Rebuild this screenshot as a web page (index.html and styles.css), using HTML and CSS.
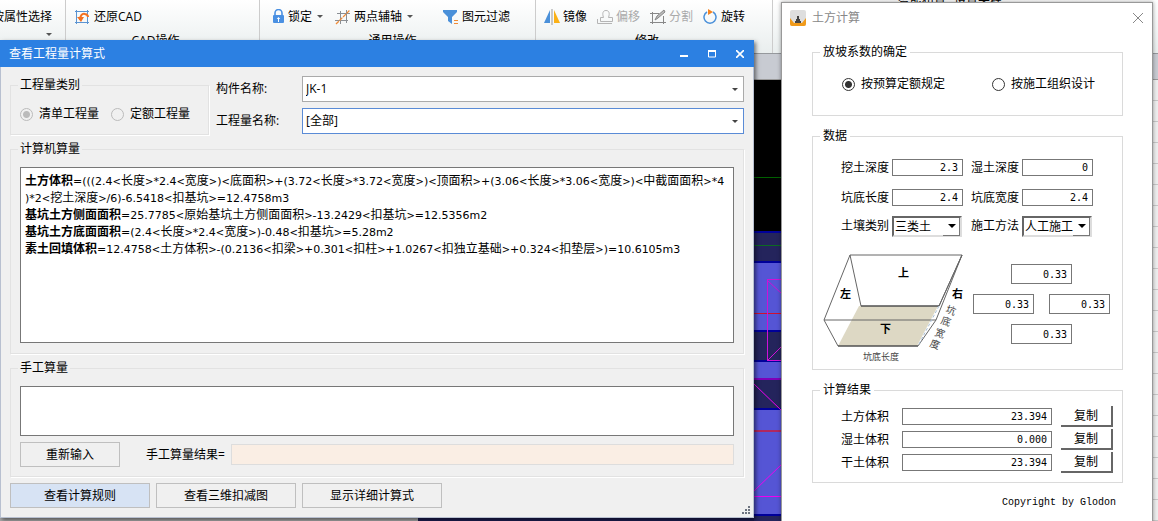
FILE: index.html
```html
<!DOCTYPE html>
<html lang="zh-CN">
<head>
<meta charset="utf-8">
<title>查看工程量计算式</title>
<link rel="stylesheet" href="styles.css">
</head>
<body>
<div class="desktop">
  <header class="ribbon">
    <section class="group group-select">
      <div class="tools"><button class="tool">按属性选择</button></div>
      <div class="caption"><i class="caret"></i></div>
    </section>
    <section class="group group-cad">
      <div class="tools">
        <button class="tool">
          <svg width="16" height="16" viewBox="0 0 16 16" fill="none"><path d="M2.500 1v14M13.500 1v14M1 2.500h14M1 13.500h14" stroke="#5b94d2"/><path d="M6 11c0-4 2-7 5-6 2 .5 3 1 3 3" stroke="#f37021" stroke-width="2"/><path d="M3 8l7 0-3 5z" fill="#f37021"/></svg>
          还原CAD
        </button>
      </div>
      <div class="caption">CAD操作 <i class="caret"></i></div>
    </section>
    <section class="group group-common">
      <div class="tools">
        <button class="tool">
          <svg width="13" height="15" viewBox="0 0 13 15"><path d="M3 7V4a3 3 0 0 1 7 0v3" fill="none" stroke="#4a90e2" stroke-width="1.6"/><rect x="1" y="6" width="11" height="8" rx="1" fill="#4a90e2"/><path d="M6.500 8l1.800 2H7v3H6v-3H4.700z" fill="#fff"/></svg>
          锁定 <i class="caret"></i>
        </button>
        <button class="tool">
          <svg width="16" height="16" viewBox="0 0 16 16" fill="none"><path d="M5.500 2v13M11.500 1v13M2 4.500h13M0 11.500h13" stroke="#8b8f94"/><path d="M1 15L15 1" stroke="#f08a35" stroke-width="1.3" stroke-dasharray="4 1"/></svg>
          两点辅轴 <i class="caret"></i>
        </button>
        <button class="tool tool-filter">
          <svg width="16" height="16" viewBox="0 0 16 16"><path d="M0 1h14v2L9 8v7l-4-3V8L0 3z" fill="#4a90d9"/><path d="M11 11.500h4M11 14.500h4" stroke="#f08a35"/></svg>
          图元过滤
        </button>
      </div>
      <div class="caption">通用操作 <i class="caret"></i></div>
    </section>
    <section class="group group-edit">
      <div class="tools">
        <button class="tool">
          <svg width="16" height="16" viewBox="0 0 16 16"><path d="M6 1v13H0z" fill="#4a90d9"/><path d="M10 1v13h6z" fill="#fbb116"/><path d="M8 0v16" stroke="#999"/></svg>
          镜像
        </button>
        <button class="tool" disabled>
          <svg width="16" height="16" viewBox="0 0 16 16" fill="none" stroke="#b5b5b5"><path d="M3.500 12.500v-4h3C5 4 6 1.500 9 1.500s4 2.500 2.500 7h4v4z"/><path d="M.5 10v4.500H15"/></svg>
          偏移
        </button>
        <button class="tool" disabled>
          <svg width="16" height="16" viewBox="0 0 16 16" fill="none" stroke="#888"><path d="M0 4.500h9M2.500 3v12M0 13.500h16M13.500 7v8"/><path d="M5 11l2-4 7-6 1 2-7 6z" fill="#bbb"/></svg>
          分割
        </button>
        <button class="tool">
          <svg width="15" height="16" viewBox="0 0 15 16" fill="none"><path d="M10 3a6 6 0 1 1-6 0" stroke="#4a90d9" stroke-width="1.500"/><path d="M5 0l5 3-5 3z" fill="#f5821f"/></svg>
          旋转
        </button>
      </div>
      <div class="caption">修改 <i class="caret"></i></div>
    </section>
    <section class="group group-smart">
      <span>智能布置</span><span>设置夹柱</span>
    </section>
  </header>
  <div class="toolstrip"></div>
  <main class="canvas"></main>
  <footer class="panels"><div class="panel-list"></div></footer>
  <svg class="model" width="28" height="441" viewBox="0 0 28 441">
    <rect width="28" height="441" fill="#000"/>
    <path d="M0 97.500h28" stroke="#006000"/>
    <path d="M0 151h28v31H0zM0 251h28v30H0zM0 299h28v30H0zM0 434h28v7H0z" fill="#24245c"/>
    <path d="M0 182h28v69H0zM0 281h28v18H0zM0 329h28v105H0z" fill="#5555d5"/>
    <path d="M0 152h28M0 182h28M0 251h28M0 281h28M0 329h28M0 435h28" stroke="#00009a" stroke-width="2"/>
    <path d="M0 165.500h28" stroke="#0c6a22"/>
    <path d="M0 233.500h28" stroke="#d01030"/>
    <path d="M0 351h28" stroke="#b02860" stroke-width="2"/>
    <path d="M0 299h28" stroke="#8000b8" stroke-width="2"/>
    <path d="M13.500 281V200M13 199.500h15M13 200l15 14M13 281l15-15M13 280.500h15" stroke="#d010d8" fill="none"/>
    <path d="M0 304l28 27M0 411l28-27M0 416.500h28" stroke="#f000f0" fill="none"/>
  </svg>
  <aside class="sidegrid"></aside>

  <section class="window calc">
    <div class="titlebar">
      <h1>查看工程量计算式</h1>
      <button aria-label="最小化"><svg width="8" height="8"><path d="M0 6h8" stroke="#fff" stroke-width="2"/></svg></button>
      <button aria-label="最大化"><svg width="8" height="8"><path d="M.5 1v6h7V1" stroke="#fff" fill="none"/><path d="M0 1h8" stroke="#fff" stroke-width="2"/></svg></button>
      <button aria-label="关闭"><svg width="8" height="8"><path d="M0 0l8 8M8 0L0 8" stroke="#fff" stroke-width="1.600"/></svg></button>
    </div>
    <div class="calc-body">
      <div class="calc-top">
        <fieldset class="kind">
          <legend>工程量类别</legend>
          <label><input type="radio" name="kind" checked disabled>清单工程量</label>
          <label><input type="radio" name="kind" disabled>定额工程量</label>
        </fieldset>
        <div class="pickers">
          <label for="component">构件名称:</label>
          <div class="combo"><select id="component"><option>JK-1</option></select></div>
          <label for="quantity">工程量名称:</label>
          <div class="combo active"><select id="quantity"><option>[全部]</option></select></div>
        </div>
      </div>
      <fieldset class="auto-box">
        <legend>计算机算量</legend>
        <div class="formula">
          <p><b>土方体积</b>=(((2.4<i>&lt;<span>长度</span>&gt;</i>*2.4<i>&lt;<span>宽度</span>&gt;</i>)<i>&lt;<span>底面积</span>&gt;</i>+(3.72<i>&lt;<span>长度</span>&gt;</i>*3.72<i>&lt;<span>宽度</span>&gt;</i>)<i>&lt;<span>顶面积</span>&gt;</i>+(3.06<i>&lt;<span>长度</span>&gt;</i>*3.06<i>&lt;<span>宽度</span>&gt;</i>)<i>&lt;<span>中截面面积</span>&gt;</i>*4<br>)*2<i>&lt;<span>挖土深度</span>&gt;</i>/6)-6.5418<i>&lt;<span>扣基坑</span>&gt;</i>=12.4758m3</p>
          <p><b>基坑土方侧面面积</b>=25.7785<i>&lt;<span>原始基坑土方侧面面积</span>&gt;</i>-13.2429<i>&lt;<span>扣基坑</span>&gt;</i>=12.5356m2</p>
          <p><b>基坑土方底面面积</b>=(2.4<i>&lt;<span>长度</span>&gt;</i>*2.4<i>&lt;<span>宽度</span>&gt;</i>)-0.48<i>&lt;<span>扣基坑</span>&gt;</i>=5.28m2</p>
          <p><b>素土回填体积</b>=12.4758<i>&lt;<span>土方体积</span>&gt;</i>-(0.2136<i>&lt;<span>扣梁</span>&gt;</i>+0.301<i>&lt;<span>扣柱</span>&gt;</i>+1.0267<i>&lt;<span>扣独立基础</span>&gt;</i>+0.324<i>&lt;<span>扣垫层</span>&gt;</i>)=10.6105m3</p>
        </div>
      </fieldset>
      <fieldset>
        <legend>手工算量</legend>
        <textarea class="manual" aria-label="手工算量"></textarea>
        <div class="manual-row">
          <button class="btn reset">重新输入</button>
          <label for="manual-result">手工算量结果=</label>
          <input id="manual-result" readonly>
        </div>
      </fieldset>
      <div class="actions">
        <button class="btn primary">查看计算规则</button>
        <button class="btn">查看三维扣减图</button>
        <button class="btn">显示详细计算式</button>
      </div>
    </div>
    <svg class="grip" width="8" height="8" fill="#6d7480"><path d="M6 0h2v2H6zM3 3h2v2H3zM6 3h2v2H6zM0 6h2v2H0zM3 6h2v2H3zM6 6h2v2H6z"/></svg>
  </section>

  <section class="window earth">
    <div class="earth-title">
      <svg width="16" height="16" viewBox="0 0 16 16"><rect width="16" height="16" rx="2" fill="#dedede"/><path d="M0 8l4 5h8l4-5v6a2 2 0 0 1-2 2H2a2 2 0 0 1-2-2z" fill="#f09a1a"/><path d="M7 6h2v3h1v2h1v2H5v-2h1V9h1z" fill="#444"/></svg>
      <h2>土方计算</h2>
      <button aria-label="关闭"><svg width="12" height="12"><path d="M1 1l10 10M11 1L1 11" stroke="#888"/></svg></button>
    </div>
    <div class="earth-body">
      <fieldset class="slope">
        <legend>放坡系数的确定</legend>
        <div class="slope-options">
          <label><input type="radio" name="slope" checked>按预算定额规定</label>
          <label><input type="radio" name="slope">按施工组织设计</label>
        </div>
      </fieldset>
      <fieldset class="data">
        <legend>数据</legend>
        <div class="fields">
          <label for="dig">挖土深度</label><input id="dig" value="2.3">
          <label class="second" for="wet">湿土深度</label><input id="wet" value="0">
          <label for="len">坑底长度</label><input id="len" value="2.4">
          <label class="second" for="wid">坑底宽度</label><input id="wid" value="2.4">
          <label class="pick" for="soil">土壤类别</label><div class="drop"><select id="soil"><option>三类土</option></select></div>
          <label class="second pick" for="method">施工方法</label><div class="drop"><select id="method"><option>人工施工</option></select></div>
        </div>
        <div class="pit">
          <svg class="pit-drawing" width="140" height="110" viewBox="0 0 140 110">
            <path d="M36 53h79L94 93H15z" fill="#ddd8c4"/>
            <path d="M27 2h112L113 67H1zM27 2l11 51h78L139 2M1 67l14 26h80l18-26M139 2L116 53" fill="none" stroke="#666"/>
            <path d="M38 53h78M15 93h80" stroke="#444"/>
            <path d="M116 53L95 93" stroke="#a9bfd6" stroke-dasharray="3 2"/>
            <g class="pit-side"><text x="75" y="24">上</text><text x="17" y="45">左</text><text x="129" y="45">右</text><text x="57" y="80">下</text></g>
            <g class="pit-label"><text x="40" y="107">坑底长度</text><text x="123" y="61" transform="rotate(20 128 57)">坑</text><text x="118" y="72" transform="rotate(20 123 68)">底</text><text x="112" y="84" transform="rotate(20 117 80)">宽</text><text x="107" y="95" transform="rotate(20 112 91)">度</text></g>
          </svg>
          <div class="ratios">
            <input aria-label="上" value="0.33">
            <div class="ratio-pair"><input aria-label="左" value="0.33"><input aria-label="右" value="0.33"></div>
            <input aria-label="下" value="0.33">
          </div>
        </div>
      </fieldset>
      <fieldset class="results">
        <legend>计算结果</legend>
        <div class="result"><label for="r1">土方体积</label><input id="r1" value="23.394" readonly><button>复制</button></div>
        <div class="result"><label for="r2">湿土体积</label><input id="r2" value="0.000" readonly><button>复制</button></div>
        <div class="result"><label for="r3">干土体积</label><input id="r3" value="23.394" readonly><button>复制</button></div>
      </fieldset>
      <p class="copyright">Copyright by Glodon</p>
    </div>
  </section>
</div>
</body>
</html>
```
FILE: styles.css
```css
* { box-sizing: border-box; }
body {
  margin: 0;
  font: 12px/16px "Open Sans", "Noto Sans CJK SC", sans-serif;
  color: #000;
}
button, input, select, textarea { font: inherit; color: inherit; margin: 0; border-radius: 0; }
button { padding: 0; border: 0; background: none; }
p, h1, h2 { margin: 0; font-size: 12px; font-weight: normal; }
fieldset { margin: 0; min-width: 0; }
svg { flex: none; }

/* Application behind the dialogs */
.desktop {
  position: relative;
  display: flex;
  flex-direction: column;
  height: 100vh;
  min-height: 521px;
  overflow: hidden;
}
.ribbon {
  display: flex;
  height: 54px;
  background: linear-gradient(#fff, #e9eeee);
  border-bottom: 1px solid #96999d;
}
.group {
  display: flex;
  flex-direction: column;
  gap: 8px;
  padding: 8px 8px 0;
  border-right: 1px solid #ccc;
  overflow: hidden;
  white-space: nowrap;
}
.group-select { width: 66px; padding-right: 13px; align-items: flex-end; }
.group-cad { width: 194px; }
.group-common { width: 276px; padding-left: 12px; }
.group-edit { width: 237px; }
.group-smart { flex: 1; flex-direction: row; padding: 0 0 0 125px; border: 0; line-height: 1px; }
.tools { display: flex; gap: 12px; }
.tool { display: flex; align-items: center; gap: 3px; height: 17px; }
.group-cad .tool { gap: 4px; }
.tool:disabled { color: #aaa; }
.group-edit .tools { gap: 10px; }
.tool-filter { margin-left: 18px; }
.caption { display: flex; justify-content: center; align-items: center; gap: 6px; }
.caret { border: 3px solid transparent; border-top-color: #555; border-bottom: 0; margin-left: 2px; }
.toolstrip { height: 26px; background: #c8cbd2; border-bottom: 1px solid #999; }
.canvas { flex: 1; background: #24245c; }
.panels { height: 3px; background: #1c1c50; }
.panel-list { width: 418px; height: 3px; background: #a9a9a9; }
.model { position: absolute; top: 80px; left: 754px; }
.sidegrid {
  position: absolute;
  top: 80px;
  right: 0;
  bottom: 0;
  width: 5px;
  background: repeating-linear-gradient(#eee 0 20px, #c8c8c8 20px 21px);
}

.window { position: absolute; }

/* Quantity formula window */
.calc {
  top: 40px;
  left: 0;
  right: 404px;
  background: #f0f0f0;
  border: solid #b8c0d0;
  border-width: 0 1px 1px;
  box-shadow: 2px 2px 4px rgba(0, 0, 0, .5);
}
.titlebar {
  display: flex;
  align-items: center;
  gap: 20px;
  height: 27px;
  margin: 0 -1px;
  padding: 0 10px 0 9px;
  background: #2c80e2;
  color: #fff;
}
.titlebar h1 { flex: 1; }
.titlebar button { display: flex; }
.calc-body { display: flex; flex-direction: column; gap: 6px; padding: 9px; }
.calc fieldset {
  padding: 10px 9px 9px;
  border: 1px solid #e2e2e2;
  box-shadow: 1px 1px #fff;
}
.calc .auto-box { padding-bottom: 10px; }
.calc legend { margin-left: -2px; padding: 0 2px; height: 16px; }
.calc-top { display: flex; gap: 7px; }
.calc .kind { display: flex; gap: 10px; width: 199px; padding: 13px 0 0 7px; margin-top: 1px; height: 58px; }
.calc .kind legend { margin-left: 0; }
.kind label { display: flex; align-items: center; gap: 6px; height: 16px; }
.kind input, .slope input {
  appearance: none;
  width: 13px;
  height: 13px;
  border: 1px solid #bbb;
  border-radius: 50%;
}
.kind input { margin-left: 2px; }
.kind input:checked { background: radial-gradient(#bbb 0 3px, transparent 4px); }
.pickers {
  flex: 1;
  display: grid;
  grid-template-columns: 79px 1fr;
  grid-auto-rows: 26px;
  gap: 6px 7px;
  align-items: center;
}
.combo { position: relative; border: 1px solid #aaa; height: 26px; background: #fff; }
.combo.active { border-color: #5a8bd6; }
.combo select { appearance: none; width: 100%; height: 24px; padding: 0 3px; border: 0; background: none; }
.combo::after, .drop::after {
  content: "";
  position: absolute;
  top: 11px;
  right: 5px;
  border: 3px solid transparent;
  border-top-color: #444;
  border-bottom: 0;
  pointer-events: none;
}
.formula {
  min-height: 176px;
  padding: 5px 4px;
  border: 1px solid #777;
  background: #fff;
  font: 11px/17px "DejaVu Sans", sans-serif;
  white-space: nowrap;
}
.formula p { font-size: 11px; }
.formula i { font-size: 10px; font-style: normal; line-height: 0; }
.formula b, .formula span { font-family: "Noto Sans CJK SC", sans-serif; font-size: 12px; line-height: 0; }
.manual { display: block; width: 100%; height: 50px; border: 1px solid #777; background: #fff; resize: none; }
.manual-row { display: flex; align-items: center; gap: 6px; margin-top: 6px; }
.manual-row input { flex: 1; height: 21px; border: 1px solid #ddd; background: #faeee4; }
.btn { width: 140px; height: 25px; border: 1px solid #bfbfbf; background: #f0f0f0; }
.reset { width: 100px; margin-right: 20px; }
.primary { background: #d7e3f4; }
.actions { display: flex; gap: 6px; }
.grip { position: absolute; right: 3px; bottom: 3px; }

/* Earthwork window */
.earth {
  top: 2px;
  right: 5px;
  bottom: -2px;
  width: 372px;
  background: #fff;
  border: 1px solid #999;
  box-shadow: 0 0 4px rgba(0, 0, 0, .4);
}
.earth-title { display: flex; align-items: center; gap: 6px; height: 30px; padding: 0 8px; color: #888; }
.earth-title h2 { flex: 1; }
.earth-title button { display: flex; }
.earth-body { display: flex; flex-direction: column; gap: 12px; padding: 11px 29px 0 30px; }
.earth fieldset { border: 1px solid #dadada; padding: 0 0 0 7px; }
.earth legend { padding: 0 3px; height: 16px; }
.earth .slope { height: 72px; }
.slope-options { display: flex; gap: 47px; padding: 16px 0 0 22px; }
.slope label { display: flex; align-items: center; gap: 6px; height: 16px; }
.slope input { border-color: #333; }
.slope input:checked { background: radial-gradient(#333 0 3px, transparent 4px); }
.earth .data { padding: 15px 12px 6px 7px; }
.fields {
  display: grid;
  grid-template-columns: 48px 71px 53px 71px;
  grid-template-rows: 30px 27px 21px;
  column-gap: 3px;
  align-items: start;
  margin-left: 21px;
}
.fields label { line-height: 17px; white-space: nowrap; }
.fields .second { padding-left: 5px; }
.fields .pick { line-height: 19px; }
.earth .data input, .results input {
  width: 100%;
  height: 17px;
  padding: 0 4px;
  border: 1px solid #777;
  background: #fff;
  text-align: right;
  font: 10px/14px "DejaVu Sans Mono", monospace;
}
.drop { position: relative; width: 70px; height: 21px; border: 2px solid #666; border-right-color: #ddd; border-bottom-color: #ddd; }
.drop select { appearance: none; display: block; width: 100%; height: 17px; padding: 0 1px; border: 0; background: none; }
.drop::before {
  content: "";
  position: absolute;
  top: 0;
  right: 0;
  width: 16px;
  height: 17px;
  background: #fff;
  border: solid #777;
  border-width: 0 1px 1px 0;
  pointer-events: none;
}
.drop::after { top: 6px; right: 4px; border-width: 4px; border-bottom: 0; border-top-color: #000; }
.pit { display: flex; justify-content: space-between; margin: 16px 0 0 3px; }
.pit-drawing { overflow: visible; }
.pit-side { font-size: 11px; font-weight: bold; }
.pit-label { font-size: 10px; fill: #444; }
.pit-label text:first-child { font-size: 9px; }
.ratios { display: flex; flex-direction: column; align-items: center; gap: 10px; width: 137px; padding-top: 11px; }
.earth .data .ratios input { width: 61px; height: 20px; }
.ratio-pair { display: flex; gap: 15px; }
.earth .results { display: grid; gap: 2px; padding: 8px 9px 9px 7px; }
.result {
  display: grid;
  grid-template-columns: 48px 1fr 52px;
  align-items: center;
  column-gap: 9px;
  height: 21px;
  margin-left: 21px;
}
.result label { white-space: nowrap; }
.results .result input { width: auto; margin-left: 4px; }
.result button {
  height: 21px;
  background: #fff;
  border: solid #666;
  border-width: 0 2px 2px 0;
}
.copyright {
  padding-right: 7px;
  text-align: right;
  font: 10px/16px "Liberation Mono", monospace;
}
```
